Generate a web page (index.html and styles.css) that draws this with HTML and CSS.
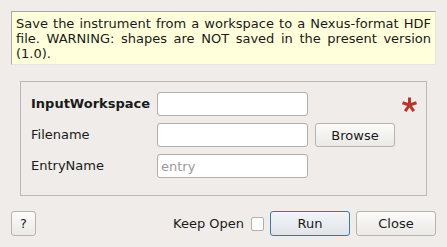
FILE: index.html
```html
<!DOCTYPE html>
<html lang="en">
<head>
  <meta charset="UTF-8">
  <title>SaveNexusGeometry input dialog</title>
  <link rel="stylesheet" href="styles.css">
</head>
<body>
  <div class="dialog">
    <p class="description">Save the instrument from a workspace to a Nexus-format HDF file. WARNING: shapes are NOT saved in the present version (1.0).</p>

    <div class="group">
      <label class="field-label required" for="inputWorkspace">InputWorkspace</label>
      <input type="text" id="inputWorkspace" class="field">
      <span></span>
      <span class="marker">
        <svg width="15" height="15" viewBox="0 0 15 15">
          <g stroke="#b8352a" stroke-width="3">
            <line x1="7.5" y1="8" x2="7.5" y2="0.5"/>
            <line x1="7.5" y1="8" x2="14.5" y2="5.7"/>
            <line x1="7.5" y1="8" x2="11.8" y2="14.2"/>
            <line x1="7.5" y1="8" x2="3.2" y2="14.2"/>
            <line x1="7.5" y1="8" x2="0.5" y2="5.7"/>
          </g>
        </svg>
      </span>

      <label class="field-label" for="filename">Filename</label>
      <input type="text" id="filename" class="field">
      <button class="btn">Browse</button>
      <span></span>

      <label class="field-label" for="entryName">EntryName</label>
      <input type="text" id="entryName" class="field" placeholder="entry">
      <span></span>
      <span></span>
    </div>

    <div class="footer">
      <button class="btn help">?</button>
      <div class="spacer"></div>
      <label class="keep-open">Keep Open <input type="checkbox" class="check"></label>
      <button class="btn primary">Run</button>
      <button class="btn">Close</button>
    </div>
  </div>
</body>
</html>
```

FILE: styles.css
```css
body {
  margin: 0;
  padding: 11px;
  background: #efece9;
  font-family: "DejaVu Sans", sans-serif;
  font-size: 13px;
  color: #1a1a1a;
}

.dialog {
  display: flex;
  flex-direction: column;
  width: 425px;
}

.description {
  margin: 0;
  height: 54px;
  box-sizing: border-box;
  padding: 4px 4px 0 4px;
  background: #ffffdc;
  border: 1px solid #a9a8a2;
  border-right-color: #e6e5de;
  border-bottom-color: #e6e5de;
  line-height: 15px;
  text-align: justify;
}

.group {
  margin: 16px 9px 0 9px;
  height: 115px;
  box-sizing: border-box;
  border: 1px solid #bcb8b3;
  padding: 10px 10px 0 10px;
  display: grid;
  grid-template-columns: 119px 151px 80px 1fr;
  grid-auto-rows: 24px;
  column-gap: 7px;
  row-gap: 7px;
  align-items: center;
}

.field-label {
  line-height: 24px;
}

.required {
  font-weight: bold;
}

.field {
  height: 24px;
  box-sizing: border-box;
  border: 1px solid #b2aea9;
  border-radius: 3px;
  background: #fff;
  font-family: "DejaVu Sans", sans-serif;
  font-size: 13px;
  padding: 0 3px;
  margin: 0;
}

.field::placeholder {
  color: #9a9a9a;
}

.marker {
  display: flex;
  justify-content: flex-end;
  margin-right: 1px;
  height: 15px;
}

.btn {
  height: 24px;
  box-sizing: border-box;
  border: 1px solid #b7b3ae;
  border-radius: 3px;
  background: linear-gradient(#fbfbfa, #ebe9e6);
  font-family: "DejaVu Sans", sans-serif;
  font-size: 13px;
  color: #1a1a1a;
  padding: 0;
  margin: 0;
}

.footer {
  display: flex;
  align-items: center;
  margin-top: 15px;
  height: 25px;
}

.footer .btn {
  height: 25px;
  width: 80px;
}

.footer .help {
  width: 25px;
}

.spacer {
  flex: 1;
}

.keep-open {
  display: flex;
  align-items: center;
  gap: 7px;
  margin-right: 6px;
}

.check {
  appearance: none;
  width: 13px;
  height: 14px;
  margin: 0;
  border: 1px solid #b2aea9;
  border-radius: 2px;
  background: #fff;
}

.footer .primary {
  border-color: #3b79a8;
  background: linear-gradient(#f3f5f7, #dfe4e9);
  margin-right: 6px;
}
```
